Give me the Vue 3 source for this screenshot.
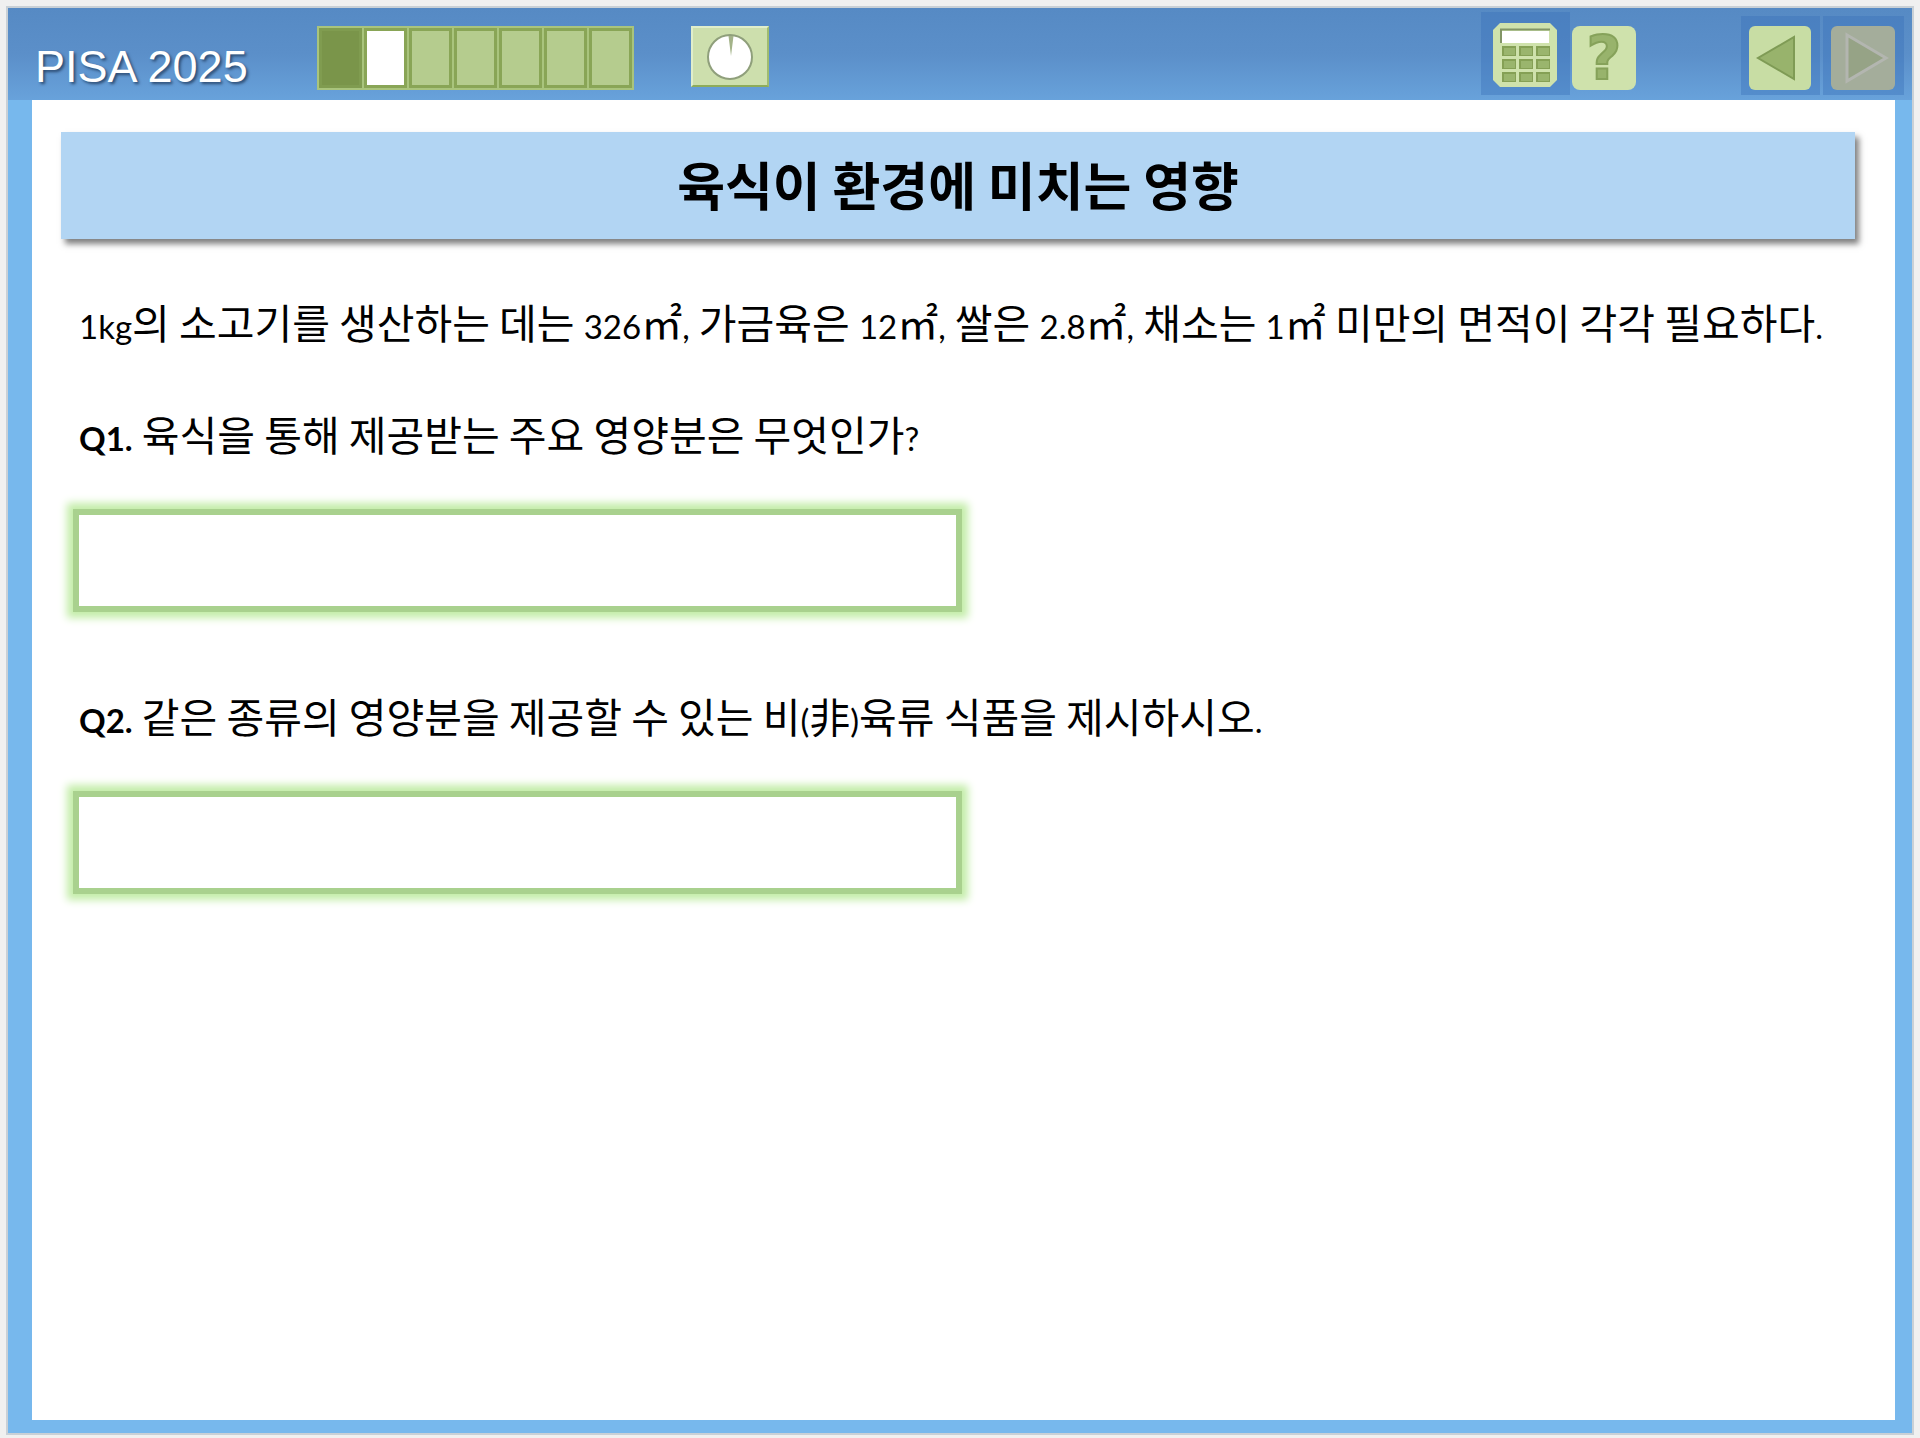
<template>
  <div class="frame">
    <header class="bar">
      <span class="bar__title">PISA 2025</span>
      <ol class="steps" aria-label="진행 상황">
        <li
          v-for="n in total"
          :key="n"
          :class="{'steps__cell': true, 'done': n < current, 'current': n === current}"
        ></li>
      </ol>
      <div class="timer" role="img" aria-label="남은 시간">
        <svg viewBox="0 0 48 48" width="48" height="48">
          <circle cx="24" cy="24" r="22" fill="#fff" stroke="#8f9f7b" stroke-width="2" />
          <path d="M22.500 3h5l-2.500 20z" fill="#a3b389" />
        </svg>
      </div>

      <div class="tools">
        <button type="button" class="tool tool--calc" aria-label="계산기">
          <svg viewBox="0 0 64 64" width="64" height="64">
            <path d="M7 0h50l7 7v50l-7 7H7l-7-7V7z" fill="#cfe2ac" />
            <path d="M8 20V6.500h49" fill="none" stroke="#829566" stroke-width="2" />
            <rect x="9" y="8" width="47" height="12" fill="#fff" />
            <g v-for="y in [23, 36, 49]" :key="y">
              <g v-for="x in [9, 26, 43]" :key="x">
                <rect :x="x" :y="y" width="14" height="10" fill="#85a055" />
                <rect :x="x + 2" :y="y + 2" width="11" height="7" fill="#9ab56d" />
              </g>
            </g>
          </svg>
        </button>
        <button type="button" class="tool tool--help" aria-label="도움말">?</button>
      </div>

      <nav class="pager">
        <button type="button" class="tool tool--nav" aria-label="이전" :disabled="current === 1" @click="current--">
          <svg viewBox="0 0 62 64" width="62" height="64">
            <rect width="62" height="64" rx="6" fill="#c8dda4" />
            <path d="M45 11v42L9 32z" fill="#98b36c" stroke="#7f9b55" stroke-width="2" />
          </svg>
        </button>
        <button type="button" class="tool tool--nav" aria-label="다음" disabled>
          <svg viewBox="0 0 64 64" width="64" height="64">
            <rect width="64" height="64" rx="6" fill="#a4ad9b" />
            <path d="M16 9l39 23-39 23z" fill="#96a386" stroke="#b3b6b0" stroke-width="3" />
          </svg>
        </button>
      </nav>
    </header>

    <main class="sheet">
      <h1 class="banner">육식이 환경에 미치는 영향</h1>
      <p class="line">
        <span v-for="(run, i) in runs(passage)" :key="i" :class="{latin: run.latin}">{{ run.text }}</span>
      </p>
      <section v-for="q in questions" :key="q.id" class="question">
        <label class="line" :for="q.id">
          <b class="latin">{{ q.id }}.</b>
          <span v-for="(run, i) in runs(' ' + q.text)" :key="i" :class="{latin: run.latin}">{{ run.text }}</span>
        </label>
        <input :id="q.id" v-model="q.answer" class="answer" type="text" autocomplete="off">
      </section>
    </main>
  </div>
</template>

<script setup>
import { ref } from 'vue'

const total = 7
const current = ref(2)

const passage = '1kg의 소고기를 생산하는 데는 326㎡, 가금육은 12㎡, 쌀은 2.8㎡, 채소는 1㎡ 미만의 면적이 각각 필요하다.'
const questions = ref([
  { id: 'Q1', text: '육식을 통해 제공받는 주요 영양분은 무엇인가?', answer: '' },
  { id: 'Q2', text: '같은 종류의 영양분을 제공할 수 있는 비(非)육류 식품을 제시하시오.', answer: '' }
])

// Latin letters, digits and marks are set smaller than the Hangul around them
function runs(text) {
  return text
    .split(/([0-9A-Za-z.,?()]+)/)
    .filter(Boolean)
    .map((part) => ({ text: part, latin: /^[0-9A-Za-z.,?()]/.test(part) }))
}
</script>

<style>
body {
  margin: 0;
  background: #f0f0f0;
}
</style>

<style scoped>
.frame {
  box-sizing: border-box;
  display: flex;
  flex-direction: column;
  min-height: calc(100vh - 9px);
  margin: 6px 6px 3px;
  border: 2px solid #c9d0d6;
  background: #77b8ed;
  color: #000;
  font-family: "Noto Sans CJK KR", sans-serif;
}

.bar {
  display: flex;
  align-items: flex-end;
  padding: 4px 8px 5px 27px;
  background: linear-gradient(#568ac4, #5b8fc9 50%, #68a2db);
}

.bar__title {
  width: 282px;
  color: #fff;
  font: 45px/56px "Liberation Sans", Arial, sans-serif;
  text-shadow: 2px 2px 3px #2b4a70;
  white-space: nowrap;
}

.steps {
  display: flex;
  gap: 2px;
  margin: 0 57px 5px 0;
  padding: 2px;
  background: #a9c47d;
  list-style: none;
}

.steps__cell {
  box-sizing: border-box;
  width: 43px;
  height: 60px;
  border: 3px solid #89a556;
  background: #b5cc8e;
}

.steps__cell.done {
  background: #7a954a;
  border-color: #809c50;
}

.steps__cell.current {
  background: #fff;
}

.timer {
  box-sizing: border-box;
  display: flex;
  justify-content: center;
  width: 78px;
  height: 61px;
  margin-bottom: 8px;
  padding-top: 5px;
  border: 2px solid #e0eecb;
  border-right-color: #9fbb70;
  border-bottom-color: #8dac5a;
  background: #cddfad;
}

.tools,
.pager {
  display: flex;
  align-items: flex-end;
}

.tools {
  gap: 2px;
  margin-right: 105px;
  margin-left: auto;
}

.pager {
  gap: 3px;
}

.tool {
  margin: 0;
  border: 0;
  cursor: pointer;
}

.tool:disabled {
  cursor: default;
}

.tool svg {
  display: block;
}

.tool--calc {
  padding: 11px 13px 8px 12px;
  background: rgba(58, 112, 184, .4);
}

.tool--help {
  width: 64px;
  height: 64px;
  margin-bottom: 5px;
  padding: 0;
  border-radius: 8px;
  background: #cfe2ac;
  color: #98b36c;
  font: bold 60px/64px "DejaVu Sans", sans-serif;
  -webkit-text-stroke: 2px #86a25a;
}

.tool--nav {
  padding: 10px 9px 5px 8px;
  background: rgba(58, 112, 184, .4);
}

.sheet {
  flex: 1;
  margin: 0 17px 13px 24px;
  padding: 32px 40px 32px 29px;
  background: #fff;
}

.banner {
  margin: 0 0 46px;
  padding-bottom: 4px;
  background: #b2d5f3;
  box-shadow: 4px 5px 6px rgba(0, 0, 0, .5);
  font-size: 52px;
  font-weight: 700;
  line-height: 103px;
  text-align: center;
}

.line {
  display: block;
  margin: 0;
  padding: 0 18px;
  font-size: 41px;
  line-height: 72px;
}

.latin {
  font-family: Lato, "Noto Sans CJK KR", sans-serif;
  font-size: 33px;
}

.question {
  padding: 35px 11px 0 12px;
}

.question .line {
  padding: 0 6px;
}

.question + .question {
  padding-top: 67px;
}

.answer {
  box-sizing: border-box;
  display: block;
  width: 100%;
  max-width: 889px;
  height: 103px;
  margin-top: 35px;
  padding: 0 20px;
  border: 6px solid #a9d18e;
  background: #fff;
  box-shadow: 0 0 8px 6px #c3eda8;
  font: 41px "Noto Sans CJK KR", sans-serif;
  outline: 0;
}
</style>
